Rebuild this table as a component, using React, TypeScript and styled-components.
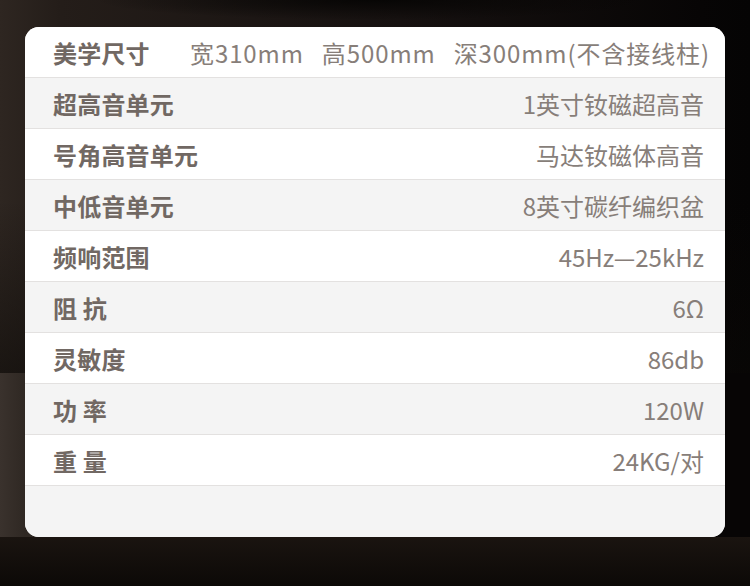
import React from "react";
import styled, { createGlobalStyle } from "styled-components";

const Global = createGlobalStyle`
  html, body { margin: 0; padding: 0; background: #0b0807; }
  body { font-family: "Noto Sans CJK SC", "Noto Sans", sans-serif; }
`;

const Page = styled.div`
  width: 750px;
  height: 586px;
  box-sizing: border-box;
  padding: 27px 25px 49px 25px;
  overflow: hidden;
  background:
    radial-gradient(ellipse 280px 20px at 375px 0px, rgba(6,5,4,0.95), rgba(6,5,4,0) 100%) 0 0 / 750px 60px no-repeat,
    radial-gradient(ellipse 240px 50px at 360px 586px, rgba(62,44,26,0.6), rgba(0,0,0,0) 100%) 0 537px / 750px 49px no-repeat,
    linear-gradient(180deg, #1a1410, #0c0907) 0 537px / 750px 49px no-repeat,
    linear-gradient(90deg, #3a322d 0px, #2f2823 25px, #1a1512 300px, #070505 680px) 0 373px / 750px 164px no-repeat,
    linear-gradient(180deg, rgba(0,0,0,0) 0px, rgba(0,0,0,0) 200px, rgba(10,8,6,0.55) 372px),
    linear-gradient(90deg, #2e2621 0px, #241d19 60px, #161110 400px, #070505 700px, #050404 750px);
`;

const Card = styled.div`
  border-radius: 14px;
  overflow: hidden;
  background: #f4f4f4;
  display: flex;
  flex-direction: column;
`;

const Row = styled.div<{ $shade: boolean; $tight?: boolean }>`
  height: 50px;
  border-bottom: 1px solid #e3e1e0;
  background: ${(p) => (p.$shade ? "#f4f4f4" : "#ffffff")};
  display: flex;
  align-items: center;
  justify-content: space-between;
  padding: 0 ${(p) => (p.$tight ? "16px" : "21px")} 0 28px;
`;

const Label = styled.span`
  font-size: 24px;
  font-weight: 700;
  color: #716863;
  white-space: pre;
  letter-spacing: 0.2px;
`;

const Value = styled.span`
  font-size: 24px;
  font-weight: 400;
  color: #877e79;
  white-space: pre;
`;

const Dims = styled.div`
  display: flex;
  gap: 18px;
  font-size: 24px;
  letter-spacing: 0.9px;
  color: #877e79;
  margin-right: -1px;
`;

const Footer = styled.div`
  height: 51px;
  background: #f4f4f4;
`;

const specs: [string, string][] = [
  ["超高音单元", "1英寸钕磁超高音"],
  ["号角高音单元", "马达钕磁体高音"],
  ["中低音单元", "8英寸碳纤编织盆"],
  ["频响范围", "45Hz—25kHz"],
  ["阻 抗", "6Ω"],
  ["灵敏度", "86db"],
  ["功 率", "120W"],
  ["重 量", "24KG/对"],
];

export default function App() {
  return (
    <>
      <Global />
      <Page>
        <Card>
          <Row $shade={false} $tight>
            <Label>美学尺寸</Label>
            <Dims>
              <span>宽310mm</span>
              <span>高500mm</span>
              <span>深300mm(不含接线柱)</span>
            </Dims>
          </Row>
          {specs.map(([k, v], i) => (
            <Row key={k} $shade={i % 2 === 0}>
              <Label>{k}</Label>
              <Value>{v}</Value>
            </Row>
          ))}
          <Footer />
        </Card>
      </Page>
    </>
  );
}
